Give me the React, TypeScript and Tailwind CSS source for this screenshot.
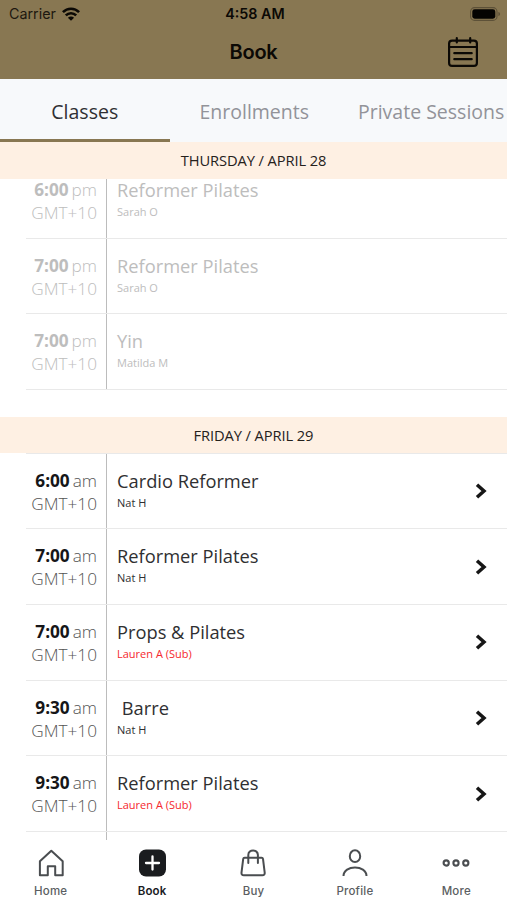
import { useState } from 'react';

interface ClassItem {
  time: string;
  period: string;
  title: string;
  teacher: string;
  sub?: boolean;
}

const TIMEZONE = 'GMT+10';

const thursday: ClassItem[] = [
  { time: '6:00', period: 'pm', title: 'Reformer Pilates', teacher: 'Sarah O' },
  { time: '7:00', period: 'pm', title: 'Reformer Pilates', teacher: 'Sarah O' },
  { time: '7:00', period: 'pm', title: 'Yin', teacher: 'Matilda M' },
];

const friday: ClassItem[] = [
  { time: '6:00', period: 'am', title: 'Cardio Reformer', teacher: 'Nat H' },
  { time: '7:00', period: 'am', title: 'Reformer Pilates', teacher: 'Nat H' },
  { time: '7:00', period: 'am', title: 'Props & Pilates', teacher: 'Lauren A (Sub)', sub: true },
  { time: '9:30', period: 'am', title: ' Barre', teacher: 'Nat H' },
  { time: '9:30', period: 'am', title: 'Reformer Pilates', teacher: 'Lauren A (Sub)', sub: true },
  { time: '', period: '', title: '', teacher: '' },
];

const tabs = ['Classes', 'Enrollments', 'Private Sessions'];

function WifiIcon() {
  return (
    <svg width="18" height="14" viewBox="0 0 18 14" fill="none" stroke="#0b0905" strokeWidth="2.6">
      <path d="M0.9 5.2C5.4 0.6 12.6 0.6 17.1 5.2" />
      <path d="M3.8 8.4C6.7 5.5 11.3 5.5 14.2 8.4" />
      <path d="M9 13.8L5.9 10.7C7.6 9.1 10.4 9.1 12.1 10.7Z" fill="#0b0905" stroke="none" />
    </svg>
  );
}

function BatteryIcon() {
  return (
    <svg width="31" height="14" viewBox="0 0 31 14" fill="none">
      <rect x="0.6" y="0.6" width="26.4" height="12.8" rx="4" stroke="#5d5138" strokeWidth="1.1" />
      <rect x="2.3" y="2.3" width="23" height="9.4" rx="2.4" fill="#050402" />
      <path d="M28.4 4.9C30.6 5.6 30.6 8.4 28.4 9.1Z" fill="#5d5138" />
    </svg>
  );
}

function CalendarIcon() {
  return (
    <svg width="30" height="30" viewBox="0 0 30 30" fill="none" stroke="#0b0905" strokeWidth="2.2" strokeLinecap="round">
      <rect x="1.1" y="3.6" width="27.8" height="25.3" rx="3" />
      <path d="M1 10H29M8.8 1.2V5.4M22.2 1.2V5.4M6.3 16.2H23.7M6.3 22.2H23.7" />
    </svg>
  );
}

function ChevronIcon() {
  return (
    <svg width="12" height="16" viewBox="0 0 12 16" fill="none" stroke="#161616" strokeWidth="3.5">
      <path d="M2 1.7L9 8L2 14.3" />
    </svg>
  );
}

function HomeIcon() {
  return (
    <svg width="28" height="28" viewBox="0 0 28 28" fill="none" stroke="#4a4d50" strokeWidth="2">
      <path d="M2.9 12.3L14.3 1.7L25.7 12.3V26.3H18.2V17.2H10.8V26.3H2.9Z" strokeLinejoin="round" />
    </svg>
  );
}

function BookIcon() {
  return (
    <svg width="28" height="28" viewBox="0 0 28 28" fill="none">
      <rect x="1" y="0.5" width="27" height="27" rx="7" fill="#1a1c1f" />
      <path d="M14.5 7.5V20.5M8 14H21" stroke="#fff" strokeWidth="2.3" strokeLinecap="round" />
    </svg>
  );
}

function BuyIcon() {
  return (
    <svg width="28" height="28" viewBox="0 0 28 28" fill="none" stroke="#4a4d50" strokeWidth="2">
      <path d="M5.6 8.7H22.6Q23.8 8.7 24 9.9L25.7 23.6C25.9 25.2 25 26.3 23.4 26.3H4.8C3.2 26.3 2.3 25.2 2.5 23.6L4.2 9.9Q4.4 8.7 5.6 8.7Z" strokeLinejoin="round" />
      <path d="M9.3 14V6C9.3 0 18.9 0 18.9 6V14" strokeLinecap="round" />
    </svg>
  );
}

function ProfileIcon() {
  return (
    <svg width="28" height="28" viewBox="0 0 28 28" fill="none" stroke="#4a4d50" strokeWidth="2">
      <ellipse cx="14" cy="7.2" rx="5.2" ry="5.9" />
      <path d="M2.5 27C2.5 15.6 25.5 15.6 25.5 27" />
    </svg>
  );
}

function MoreIcon() {
  return (
    <svg width="28" height="28" viewBox="0 0 28 28" fill="none" stroke="#4a4d50" strokeWidth="2.1">
      <circle cx="4.2" cy="14" r="2.6" />
      <circle cx="14" cy="14" r="2.6" />
      <circle cx="23.8" cy="14" r="2.6" />
    </svg>
  );
}

const navItems = [
  { label: 'Home', icon: <HomeIcon /> },
  { label: 'Book', icon: <BookIcon /> },
  { label: 'Buy', icon: <BuyIcon /> },
  { label: 'Profile', icon: <ProfileIcon /> },
  { label: 'More', icon: <MoreIcon /> },
];

function DayHeader({ label }: { label: string }) {
  return (
    <div className="flex h-[36.5px] shrink-0 items-center justify-center bg-[#fef0e3] text-[14.7px] tracking-[-0.1px] text-[#25211c]">
      {label}
    </div>
  );
}

function ClassRow({ item, past }: { item: ClassItem; past?: boolean }) {
  return (
    <div className={`ml-[26px] flex h-[75.7px] shrink-0 border-b border-[#e9e9e9] ${past ? 'text-[#bdbdbd]' : 'text-[#2f2f31]'}`}>
      <div className="w-[81px] shrink-0 border-r border-[#bcbcbc] pt-[15px] pr-[9px] text-right">
        {item.time && (
          <>
            <p className="text-[17.2px] leading-[24px] whitespace-nowrap">
              <span className={`font-bold ${past ? '' : 'text-[#161618]'}`}>{item.time}</span>
              <span className={`ml-[3px] font-light ${past ? '' : 'text-[#555]'}`}>{item.period}</span>
            </p>
            <p className={`text-[17.2px] leading-[22px] font-light ${past ? '' : 'text-[#555]'}`}>{TIMEZONE}</p>
          </>
        )}
      </div>
      <div className="flex-1 pt-[14px] pl-[10px]">
        <p className="text-[18.3px] leading-[25px] whitespace-pre">{item.title}</p>
        <p className={`text-[11px] leading-[19px] ${item.sub ? 'text-[#f5282d]' : ''}`}>{item.teacher}</p>
      </div>
      {!past && item.title && (
        <div className="flex items-center pr-5">
          <ChevronIcon />
        </div>
      )}
    </div>
  );
}

export default function App() {
  const [activeTab, setActiveTab] = useState('Classes');
  const [activeNav, setActiveNav] = useState('Book');

  return (
    <div className="flex h-[900px] w-[507px] flex-col overflow-hidden bg-white font-['Open_Sans',sans-serif]">
      <header className="h-[79px] shrink-0 bg-[#887752] font-[Inter,sans-serif] text-[#0b0905]">
        <div className="grid h-[27px] grid-cols-3 items-center pr-[6px] pl-[9px] text-[14.3px]">
          <div className="flex items-center gap-[6px] text-[#1d180f]">
            <span>Carrier</span>
            <WifiIcon />
          </div>
          <span className="text-center font-semibold">4:58 AM</span>
          <div className="flex justify-end">
            <BatteryIcon />
          </div>
        </div>
        <div className="grid h-[50px] grid-cols-3 items-center pr-[29px] pl-[29px]">
          <span />
          <h1 className="text-center text-[20px] font-semibold tracking-[-0.2px]">Book</h1>
          <button className="justify-self-end">
            <CalendarIcon />
          </button>
        </div>
      </header>

      <nav className="flex h-[63px] shrink-0 overflow-hidden bg-[#f7f9fb]">
        {tabs.map((tab) => (
          <button
            key={tab}
            onClick={() => setActiveTab(tab)}
            className={`min-w-[169.5px] shrink-0 border-b-[3px] px-[19px] pt-[6px] text-[19.5px] ${
              activeTab === tab ? 'border-[#887752] text-[#2f3033]' : 'border-transparent text-[#929399]'
            }`}
          >
            {tab}
          </button>
        ))}
      </nav>

      <DayHeader label="THURSDAY / APRIL 28" />
      <div className="flex h-[211.5px] shrink-0 flex-col justify-end overflow-hidden">
        {thursday.map((item, i) => (
          <ClassRow key={i} item={item} past />
        ))}
      </div>

      <div className="h-[26.5px] shrink-0" />
      <DayHeader label="FRIDAY / APRIL 29" />
      <div className="ml-[26px] h-[0.6px] shrink-0 bg-[#e9e9e9]" />
      <div className="flex min-h-0 flex-1 flex-col overflow-hidden">
        {friday.map((item, i) => (
          <ClassRow key={i} item={item} />
        ))}
      </div>

      <footer className="grid h-[60px] shrink-0 grid-cols-5 bg-white">
        {navItems.map(({ label, icon }) => (
          <button
            key={label}
            onClick={() => setActiveNav(label)}
            className={`flex flex-col items-center pt-[9px] font-[Inter,sans-serif] text-[11.5px] leading-[18px] tracking-[0.2px] ${
              activeNav === label ? 'font-semibold text-[#1a1c1f]' : 'font-medium text-[#5b5e62]'
            }`}
          >
            {icon}
            <span className="mt-[5px]">{label}</span>
          </button>
        ))}
      </footer>
    </div>
  );
}
